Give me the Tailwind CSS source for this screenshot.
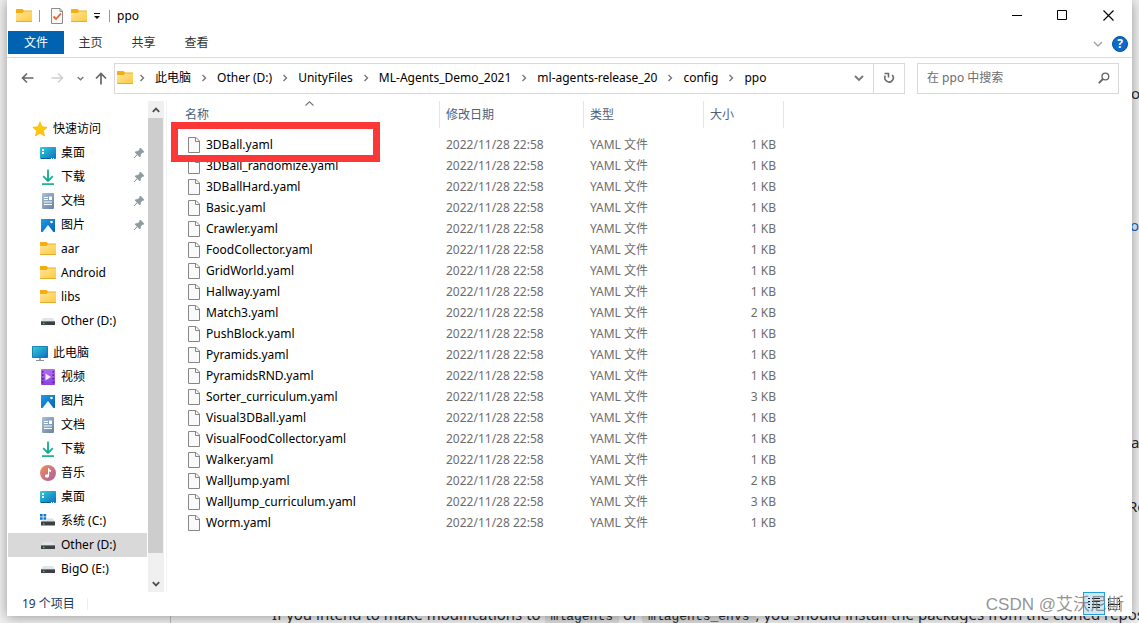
<!DOCTYPE html>
<html lang="zh-CN">
<head>
<meta charset="utf-8">
<title>ppo</title>
<script src="https://cdn.jsdelivr.net/npm/@tailwindcss/browser@4"></script>
</head>
<body class="relative flex min-h-screen flex-col overflow-hidden bg-[#f0f0f0] px-[7px] pb-[7px] font-['Noto_Sans','Noto_Sans_CJK_SC',sans-serif] text-xs text-black">

<svg class="absolute size-0" aria-hidden="true">
  <defs>
    <linearGradient id="gFolder" x1="0" y1="0" x2="1" y2="1"><stop offset="0" stop-color="#ffe69a"/><stop offset="1" stop-color="#fdc93f"/></linearGradient>
    <linearGradient id="gDesk" x1="0" y1="0" x2="1" y2="1"><stop offset="0" stop-color="#2fd0dc"/><stop offset="1" stop-color="#0f6cc0"/></linearGradient>
    <linearGradient id="gDown" gradientUnits="userSpaceOnUse" x1="0" y1="1" x2="0" y2="13"><stop offset="0" stop-color="#2fc48c"/><stop offset="1" stop-color="#0fa595"/></linearGradient>
    <linearGradient id="gDoc" x1="0" y1="0" x2="1" y2="1"><stop offset="0" stop-color="#a9bfd4"/><stop offset="1" stop-color="#6684a5"/></linearGradient>
    <linearGradient id="gPic" x1="0" y1="0" x2="1" y2="1"><stop offset="0" stop-color="#1f9ce8"/><stop offset="1" stop-color="#0560b4"/></linearGradient>
    <linearGradient id="gVid" x1="0" y1="0" x2="0" y2="1"><stop offset="0" stop-color="#b46cf0"/><stop offset="1" stop-color="#8a42dc"/></linearGradient>
    <linearGradient id="gMus" x1="0" y1="0" x2="1" y2="1"><stop offset="0" stop-color="#f29152"/><stop offset="1" stop-color="#a85aa8"/></linearGradient>
    <symbol id="folder" viewBox="0 0 16 16"><path d="M0 1.600Q0 1 .6 1H6.500L8 2.500H15.400Q16 2.500 16 3V7H0Z" fill="#f4ae10"/><path d="M0 5H6.500L8 3.500H16V13Q16 13.600 15.400 13.600H.6Q0 13.600 0 13Z" fill="url(#gFolder)"/><path d="M0 13H16V13.300Q16 14 15.400 14H.6Q0 14 0 13.300Z" fill="#e9ab28"/></symbol>
    <symbol id="star" viewBox="0 0 16 16"><path d="M8 1L10.100 5.800L15.200 6.300L11.400 9.800L12.500 15L8 12.300L3.500 15L4.600 9.800L.8 6.300L5.900 5.800Z" fill="#ffc60b" stroke="#f8b400" stroke-width=".7"/></symbol>
    <symbol id="desk" viewBox="0 0 16 16"><rect y="2" width="16" height="12" rx="1" fill="url(#gDesk)"/><path d="M2 4h2v2H2zM2 7h2v2H2z" fill="#fff"/><path d="M1 13h10v1H1z" fill="#0c5c9c"/><path d="M11 13h1v1h-1zM13 13h1v1h-1z" fill="#fff"/></symbol>
    <symbol id="down" viewBox="0 0 16 16"><path d="M3.200 7.200L8 12L12.800 7.200" fill="none" stroke="url(#gDown)" stroke-width="1.900"/><path d="M7 .5H9V11.500H7Z" fill="url(#gDown)"/><path d="M2 14.200H14V16H2Z" fill="#20b48b"/></symbol>
    <symbol id="doc" viewBox="0 0 16 16"><rect x="2" width="12" height="16" rx="1" fill="url(#gDoc)"/><path d="M4 4h4v1H4zM4 6h4v1H4zM4 8.500h8v1H4zM4 11h8v1H4zM9 3.500h3v3.500H9z" fill="#fff"/></symbol>
    <symbol id="pic" viewBox="0 0 16 16"><path d="M1 2H15V15H1Z" fill="url(#gPic)"/><path d="M2.500 15L8 8L13.500 15Z" fill="#f2f9ff"/><circle cx="11.500" cy="5" r="1.300" fill="#fff"/></symbol>
    <symbol id="video" viewBox="0 0 16 16"><rect x="1" width="14" height="16" rx="1" fill="url(#gVid)"/><path d="M2 2h1.500v1.500H2zM2 5.500h1.500V7H2zM2 9h1.500v1.500H2zM2 12.500h1.500V14H2zM12.500 2H14v1.500h-1.500zM12.500 5.500H14V7h-1.500zM12.500 9H14v1.500h-1.500zM12.500 12.500H14V14h-1.500z" fill="#4b2390"/><path d="M5.500 4.500L11 8L5.500 11.500Z" fill="#f4eafc"/></symbol>
    <symbol id="music" viewBox="0 0 16 16"><circle cx="8" cy="8" r="8" fill="url(#gMus)"/><ellipse cx="7" cy="11" rx="2.100" ry="1.800" fill="#fff"/><path d="M8 3H9Q9 5 11 5.200V6.800Q9.800 6.800 9.100 6.200V11H8Z" fill="#fff"/></symbol>
    <symbol id="drive" viewBox="0 0 16 16"><path d="M3 5H13L15 8.500H1Z" fill="#e2e4e8"/><path d="M1 8.500Q1 8 1.500 8H14.500Q15 8 15 8.500V11.500Q15 12 14.500 12H1.500Q1 12 1 11.500Z" fill="#3c3f43"/><path d="M1 8H15V9H1Z" fill="#777b80"/><path d="M3 9.700h1.500V11H3z" fill="#35e25c"/></symbol>
    <symbol id="sysdrive" viewBox="0 0 16 16"><path d="M0 1h2.700v2.500H0zM3.500 1h2.700v2.500H3.500zM0 4.300h2.700v2.500H0zM3.500 4.300h2.700v2.500H3.500z" fill="#0b78d4"/><path d="M7 5.500H13L15 9H1L2.500 7.200H7Z" fill="#dcdfe4"/><path d="M1 8.500H15V12Q15 12.500 14.500 12.500H1.500Q1 12.500 1 12Z" fill="#3c3f43"/><path d="M3 10.200h1.500v1.300H3z" fill="#35e25c"/></symbol>
    <symbol id="pc" viewBox="0 0 16 16"><rect y="1" width="16" height="12" rx=".8" fill="#1477a8"/><rect x=".8" y="1.800" width="14.400" height="10.400" fill="url(#gDesk)"/><path d="M7 13H9V15H7Z" fill="#9aa4ae"/><path d="M4 15H12V16H4Z" fill="#8b959e"/></symbol>
    <symbol id="pin" viewBox="0 0 12 12"><path d="M7.300 1L11 4.700L10 5.500L9.400 5.200L7.500 7.200Q7.800 9 6.800 10L4.500 7.700L1 11L4.200 7.400L2 5.200Q3.200 4.200 4.900 4.500L6.800 2.600L6.500 2Z" fill="#8e9aa2" stroke="#8e9aa2" stroke-width=".8"/></symbol>
    <symbol id="file" viewBox="0 0 14 16"><path d="M1.500 .5H9L12.500 4V15.500H1.500Z" fill="#fafafa" stroke="#868686"/><path d="M8.500 .5V4.500H12.500" fill="none" stroke="#868686"/></symbol>
    <symbol id="chev" viewBox="0 0 8 8"><path d="M2.500 1L5.500 4L2.500 7" fill="none" stroke="#777" stroke-width="1.400"/></symbol>
  </defs>
</svg>

<!-- page lying under the window -->
<div class="absolute inset-0 text-[15px] leading-5 text-[#24292f]">
  <div class="absolute bottom-0 left-[170px] h-2 w-px bg-[#bbb]"></div>
  <p class="absolute top-[604px] left-[272px] whitespace-nowrap">If you intend to make modifications to <code class="rounded bg-[#dcdcdc] px-1.5 font-['Liberation_Mono',monospace] text-[13px]">mlagents</code> or <code class="rounded bg-[#dcdcdc] px-1.5 font-['Liberation_Mono',monospace] text-[13px]">mlagents_envs</code>, you should install the packages from the cloned repos</p>
  <span class="absolute top-[83px] left-[1131px]">o</span>
  <span class="absolute top-[215px] left-[1130px] text-[#0969da]">or</span>
  <span class="absolute top-[432px] left-[1131px]">a</span>
  <span class="absolute top-[496px] left-[1128px]">Re</span>
</div>

<main class="relative flex grow flex-col bg-white shadow-[0_1px_12px_rgba(0,0,0,0.38)]">
  <header class="flex h-[31px] items-center pl-[9px]">
    <svg class="size-4"><use href="#folder"/></svg>
    <span class="ml-[7px] h-3 w-px bg-[#999]"></span>
    <button aria-label="属性" class="ml-[10px]"><svg class="h-4 w-[14px]" viewBox="0 0 14 16"><path d="M1.500 .5H10L12.500 3V15.500H1.500Z" fill="#f8f8f8" stroke="#8c8c8c"/><path d="M10 .5V3.500H12.500" fill="none" stroke="#8c8c8c"/><path d="M3.500 8.500L6 11L11 5.500" fill="none" stroke="#e8602c" stroke-width="1.800"/></svg></button>
    <button aria-label="新建文件夹" class="ml-[7px]"><svg class="size-4"><use href="#folder"/></svg></button>
    <button aria-label="自定义快速访问工具栏" class="ml-[6px] pt-0.5"><svg class="size-2" viewBox="0 0 8 8"><path d="M1 0H7V1H1ZM1 3H7L4 6Z" fill="#111"/></svg></button>
    <span class="ml-2 h-3 w-px bg-[#999]"></span>
    <h1 class="ml-[7px]">ppo</h1>
    <div class="mr-px ml-auto flex h-full">
      <button aria-label="最小化" class="flex w-[45px] items-center justify-center"><svg class="size-[11px]" viewBox="0 0 11 11"><path d="M0 5.500H10" stroke="#000"/></svg></button>
      <button aria-label="最大化" class="flex w-[45px] items-center justify-center"><svg class="size-[11px]" viewBox="0 0 11 11"><path d="M.5 .5H9.500V9.500H.5Z" fill="none" stroke="#000"/></svg></button>
      <button aria-label="关闭" class="flex w-[46px] items-center justify-center"><svg class="size-[11px]" viewBox="0 0 11 11"><path d="M.5 .5L10.500 10.500M10.500 .5L.5 10.500" stroke="#000" stroke-width="1.100"/></svg></button>
    </div>
  </header>

  <nav class="flex h-[27px] items-start border-b border-[#dadbdc] pl-px">
    <button class="h-[23px] w-14 bg-[#0063b1] pt-px text-white">文件</button>
    <button class="h-[23px] w-[53px] pt-px text-[#333]">主页</button>
    <button class="h-[23px] w-[53px] pt-px text-[#333]">共享</button>
    <button class="h-[23px] w-[53px] pt-px text-[#333]">查看</button>
    <button aria-label="展开功能区" class="mt-2 ml-auto"><svg class="size-[10px]" viewBox="0 0 10 10"><path d="M1 3L5 7L9 3" fill="none" stroke="#a0a0a0" stroke-width="1.300"/></svg></button>
    <button aria-label="帮助" class="mt-[5px] mr-1 ml-[9px] size-4 rounded-full border border-[#004f98] bg-[#0a6bcb] text-[12px] leading-[14px] font-bold text-white">?</button>
  </nav>

  <div class="flex h-10 items-center pr-[13px] pl-[14px]">
    <button aria-label="后退"><svg class="h-3 w-[13px]" viewBox="0 0 13 12"><path d="M12.500 6H1.500M6 1.500L1.500 6L6 10.500" fill="none" stroke="#666" stroke-width="1.600"/></svg></button>
    <button aria-label="前进" class="ml-[17px]"><svg class="h-3 w-[13px]" viewBox="0 0 13 12"><path d="M.5 6H11.500M7 1.500L11.500 6L7 10.500" fill="none" stroke="#d0d0d0" stroke-width="1.600"/></svg></button>
    <button aria-label="最近浏览的位置" class="ml-[13px]"><svg class="size-[7px]" viewBox="0 0 7 7"><path d="M.7 2L3.500 4.800L6.300 2" fill="none" stroke="#777" stroke-width="1.400"/></svg></button>
    <button aria-label="上移" class="ml-[11px]"><svg class="h-[13px] w-3" viewBox="0 0 12 13"><path d="M6 12.500V1.500M1 6.500L6 1.500L11 6.500" fill="none" stroke="#666" stroke-width="1.700"/></svg></button>
    <div class="ml-[7px] flex h-[31px] min-w-0 grow items-center border border-[#d9d9d9] pl-0.5">
      <svg class="size-4 shrink-0"><use href="#folder"/></svg>
      <ol id="crumbs" class="-ml-1 flex items-center"></ol>
      <button aria-label="上一个位置" class="mr-[9px] ml-auto"><svg class="size-[10px]" viewBox="0 0 10 10"><path d="M1 3L5 7L9 3" fill="none" stroke="#777" stroke-width="1.900"/></svg></button>
      <button aria-label="刷新" class="flex h-full w-[31px] items-center justify-center border-l border-[#d9d9d9]"><svg class="size-3" viewBox="0 0 12 12"><path d="M9.200 3A4.200 4.200 0 1 1 2.400 3.700" fill="none" stroke="#6c6c6c" stroke-width="1.600"/><path d="M1.500 1.500H5.500V5.500" fill="none" stroke="#6c6c6c" stroke-width="1.600"/></svg></button>
    </div>
    <label class="ml-3 flex h-[31px] w-[202px] items-center border border-[#d9d9d9] pr-2 pl-[9px]">
      <input type="search" aria-label="在 ppo 中搜索" placeholder="在 ppo 中搜索" class="min-w-0 grow outline-none placeholder:text-[#6d6d6d]">
      <svg class="size-3" viewBox="0 0 12 12"><circle cx="7.500" cy="4.500" r="3.400" fill="none" stroke="#666" stroke-width="1.400"/><path d="M5 7L.8 11.200" stroke="#666" stroke-width="1.900"/></svg>
    </label>
  </div>

  <div class="flex grow">
    <aside class="w-[141px] pt-[19px] pr-px pl-px">
      <ul id="quick"></ul>
      <ul id="pc-list" class="mt-2"></ul>
    </aside>
    <div class="mt-[3px] flex w-4 flex-col items-center bg-[#f0f0f0]">
      <button aria-label="向上滚动" class="flex h-[17px] items-center"><svg class="size-2" viewBox="0 0 8 8"><path d="M.8 5.800L4 2.600L7.200 5.800" fill="none" stroke="#505050" stroke-width="1.900"/></svg></button>
      <div class="mr-px w-[15px] grow bg-[#cdcdcd]"></div>
      <div class="h-[22px]"></div>
      <button aria-label="向下滚动" class="flex h-[17px] items-center"><svg class="size-2" viewBox="0 0 8 8"><path d="M.8 2.200L4 5.400L7.200 2.200" fill="none" stroke="#505050" stroke-width="1.900"/></svg></button>
    </div>
    <section class="relative mt-[3px] ml-0.5 grow border-l border-[#f2f2f2]">
      <table class="w-[617px] table-fixed border-separate border-spacing-0 text-left">
        <thead>
          <tr class="h-[27px] text-[#4c607a]">
            <th class="relative w-[273px] border-r border-[#e5e5e5] p-0 pl-[18px] font-normal">名称<svg class="absolute top-0 left-[138px] h-[5px] w-[9px]" viewBox="0 0 9 5"><path d="M.5 4.500L4.500 .8L8.500 4.500" fill="none" stroke="#777" stroke-width="1.100"/></svg></th>
            <th class="w-[144px] border-r border-[#e5e5e5] p-0 pl-[6px] font-normal">修改日期</th>
            <th class="w-[120px] border-r border-[#e5e5e5] p-0 pl-[6px] font-normal">类型</th>
            <th class="w-20 border-r border-[#e5e5e5] p-0 pl-[6px] font-normal">大小</th>
          </tr>
        </thead>
        <tbody id="files"><tr class="h-[6px]"><td colspan="4" class="p-0"></td></tr></tbody>
      </table>
      <div class="absolute top-[21px] left-1 h-10 w-[209px] border-[7px] border-[#fc3737]"></div>
    </section>
  </div>

  <footer class="flex h-6 items-center pl-[15px] text-[#1e395b]">
    <span>19 个项目</span>
    <span class="ml-3 h-3 w-px bg-[#eee]"></span>
    <div class="mr-[9px] ml-auto flex items-center self-start">
      <button aria-label="详细信息" class="flex h-[23px] w-[22px] items-center justify-center border border-[#26a0da] bg-[#cce8f7]"><svg class="size-[14px]" viewBox="0 0 14 14"><path d="M1 1.500H3M5 1.500H13M1 4.500H3M5 4.500H13M1 7.500H3M5 7.500H13M1 10.500H3M5 10.500H13" stroke="#222"/></svg></button>
      <button aria-label="大图标" class="flex h-[23px] w-[18px] items-center justify-center"><svg class="size-[14px]" viewBox="0 0 14 14"><path d="M1.500 1.500H12.500V12.500H1.500Z" fill="none" stroke="#222" stroke-dasharray="2 1"/><path d="M1 7.500H13" stroke="#222"/></svg></button>
    </div>
  </footer>
</main>

<div class="absolute right-[15px] bottom-[6px] font-['Liberation_Sans','Noto_Sans_CJK_SC',sans-serif] text-[17px] leading-6 whitespace-nowrap text-[#777]/80">CSDN @艾沃尼斯</div>

<script>
const crumbs = ['此电脑', 'Other (D:)', 'UnityFiles', 'ML-Agents_Demo_2021', 'ml-agents-release_20', 'config', 'ppo'];
document.getElementById('crumbs').innerHTML = crumbs.map(c =>
  `<li class="flex items-center whitespace-nowrap"><svg class="mx-[9px] size-2"><use href="#chev"/></svg><a href="#">${c}</a></li>`).join('');

const item = ([icon, name, opt]) => {
  const root = opt === 'root';
  return `<li><a href="#" class="flex h-6 items-center gap-[5px] whitespace-nowrap ${root ? 'pl-6' : 'pl-8'} ${opt === 'on' ? 'bg-[#d9d9d9]' : ''}"><svg class="size-4 shrink-0"><use href="#${icon}"/></svg><span>${name}</span>${opt === 'pin' ? '<svg class="mr-[2px] ml-auto size-3"><use href="#pin"/></svg>' : ''}</a></li>`;
};
document.getElementById('quick').innerHTML = [
  ['star', '快速访问', 'root'], ['desk', '桌面', 'pin'], ['down', '下载', 'pin'], ['doc', '文档', 'pin'], ['pic', '图片', 'pin'],
  ['folder', 'aar'], ['folder', 'Android'], ['folder', 'libs'], ['drive', 'Other (D:)']].map(item).join('');
document.getElementById('pc-list').innerHTML = [
  ['pc', '此电脑', 'root'], ['video', '视频'], ['pic', '图片'], ['doc', '文档'], ['down', '下载'], ['music', '音乐'], ['desk', '桌面'],
  ['sysdrive', '系统 (C:)'], ['drive', 'Other (D:)', 'on'], ['drive', 'BigO (E:)']].map(item).join('');

const files = [['3DBall', 1], ['3DBall_randomize', 1], ['3DBallHard', 1], ['Basic', 1], ['Crawler', 1], ['FoodCollector', 1], ['GridWorld', 1],
  ['Hallway', 1], ['Match3', 2], ['PushBlock', 1], ['Pyramids', 1], ['PyramidsRND', 1], ['Sorter_curriculum', 3], ['Visual3DBall', 1],
  ['VisualFoodCollector', 1], ['Walker', 1], ['WallJump', 2], ['WallJump_curriculum', 3], ['Worm', 1]];
document.getElementById('files').insertAdjacentHTML('beforeend', files.map(([n, kb]) =>
  `<tr class="h-[21px] leading-5 text-[#6d6d6d]"><td class="p-0 pl-5"><div class="flex items-center gap-[5px] text-black"><svg class="h-4 w-[14px]"><use href="#file"/></svg>${n}.yaml</div></td><td class="p-0 pl-[6px]">2022/11/28 22:58</td><td class="p-0 pl-[6px]">YAML 文件</td><td class="p-0 pr-2 text-right">${kb} KB</td></tr>`).join(''));
</script>
</body>
</html>
